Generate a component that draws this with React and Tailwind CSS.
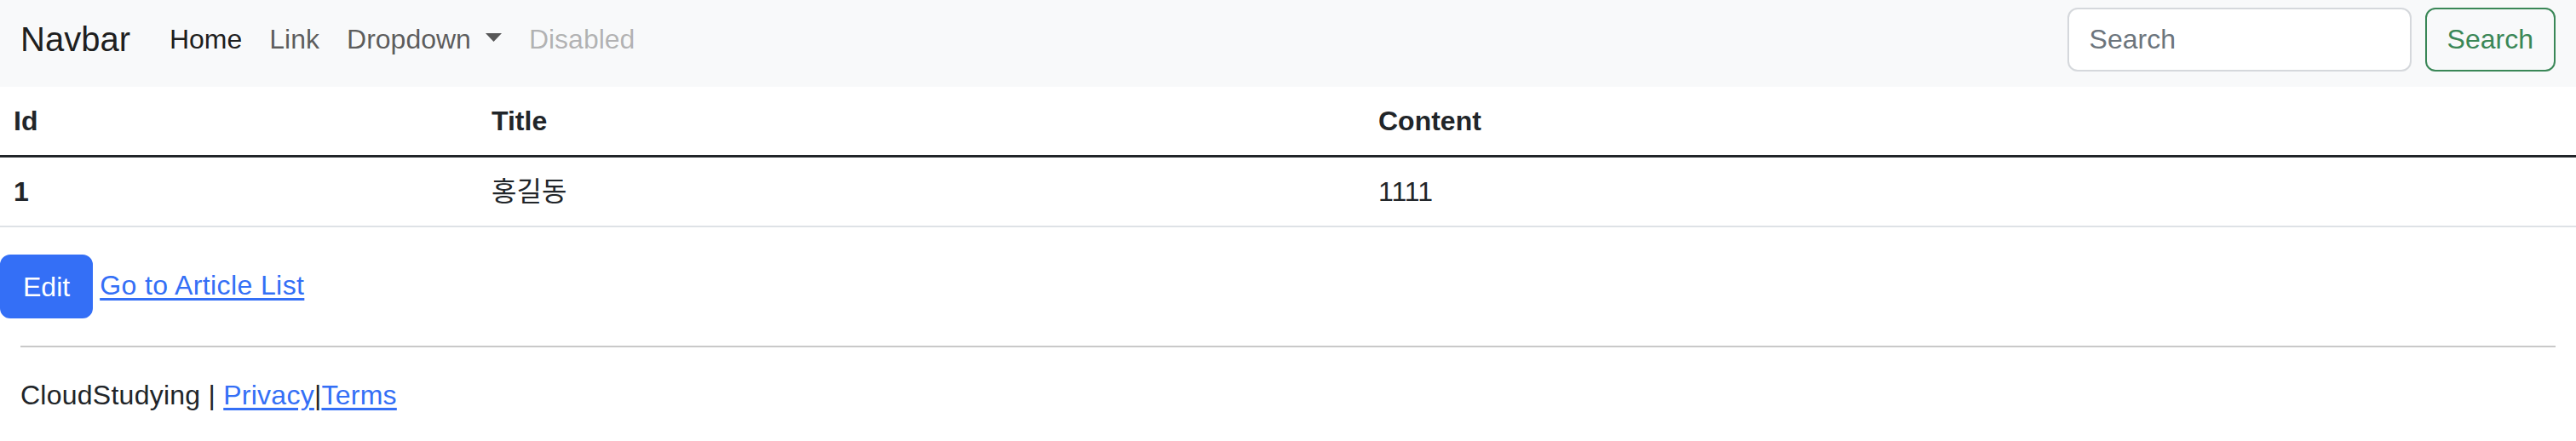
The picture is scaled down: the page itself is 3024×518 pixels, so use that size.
import { useState } from 'react';

const navLinks = [
  { label: 'Home', className: 'text-black/90' },
  { label: 'Link', className: 'text-black/65' },
];

function Caret() {
  return (
    <svg width="19" height="10" viewBox="0 0 19 10" className="ml-[17px] inline-block align-[8px] fill-current">
      <polygon points="0,0 19,0 9.5,10" />
    </svg>
  );
}

function Navbar() {
  const [query, setQuery] = useState('');

  return (
    <nav className="h-[102px] bg-[#f8f9fa]">
      <div className="flex h-[92px] items-center px-6">
        <a href="#" className="mr-[30px] text-[40px] leading-[60px] text-black/90">
          Navbar
        </a>
        <ul className="flex items-center">
          {navLinks.map((link) => (
            <li key={link.label}>
              <a href="#" className={`block px-4 py-4 ${link.className}`}>
                {link.label}
              </a>
            </li>
          ))}
          <li>
            <a href="#" className="block px-4 py-4 text-black/65">
              Dropdown
              <Caret />
            </a>
          </li>
          <li>
            <span className="block px-4 py-4 text-black/30">Disabled</span>
          </li>
        </ul>
        <form className="ml-auto flex items-center gap-4" onSubmit={(e) => e.preventDefault()}>
          <input
            type="search"
            value={query}
            onChange={(e) => setQuery(e.target.value)}
            placeholder="Search"
            className="h-[75px] w-[404px] rounded-[12px] border-2 border-[#d5d8dc] bg-white px-6 text-[#212529] outline-none placeholder:text-[#6c757d]"
          />
          <button
            type="submit"
            className="h-[75px] rounded-[12px] border-2 border-[#3a8757] px-6 text-[#3a8757]"
          >
            Search
          </button>
        </form>
      </div>
    </nav>
  );
}

function ArticleTable() {
  return (
    <table className="w-full table-fixed border-collapse">
      <colgroup>
        <col className="w-[561px]" />
        <col className="w-[1041px]" />
        <col />
      </colgroup>
      <thead>
        <tr className="border-b-[3px] border-[#212529]">
          <th className="p-4 text-left font-bold">Id</th>
          <th className="p-4 text-left font-bold">Title</th>
          <th className="p-4 text-left font-bold">Content</th>
        </tr>
      </thead>
      <tbody>
        <tr className="border-b-2 border-[#dee2e6]">
          <th className="p-4 text-left font-bold">1</th>
          <td className="p-4">홍길동</td>
          <td className="p-4">1111</td>
        </tr>
      </tbody>
    </table>
  );
}

export default function App() {
  return (
    <div className="min-h-screen bg-white font-['Liberation_Sans','Noto_Sans_CJK_KR',sans-serif] text-[32px] leading-[48px] text-[#212529]">
      <Navbar />
      <ArticleTable />

      <div className="mt-8 flex items-center gap-2">
        <a
          href="#"
          className="flex h-[75px] items-center rounded-[12px] border-2 border-[#346ff6] bg-[#346ff6] px-[25px] text-white"
        >
          Edit
        </a>
        <a href="#" className="mb-[3px] tracking-[0.4px] text-[#346ff6] underline underline-offset-[4px]">
          Go to Article List
        </a>
      </div>

      <hr className="mx-6 mt-8 border-t-2 border-[#c9c9c9]" />
      <footer className="mx-6 mt-8 tracking-[0.25px]">
        <p>
          CloudStudying |{' '}
          <a href="#" className="text-[#346ff6] underline underline-offset-[4px]">
            Privacy
          </a>
          |
          <a href="#" className="text-[#346ff6] underline underline-offset-[4px]">
            Terms
          </a>
        </p>
      </footer>
    </div>
  );
}
